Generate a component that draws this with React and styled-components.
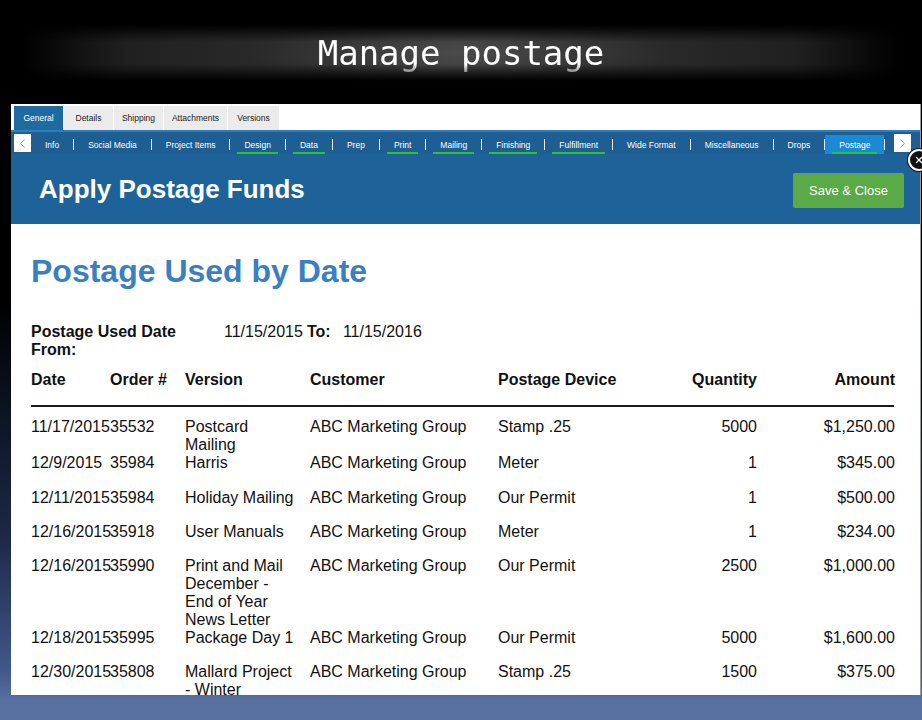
import { Fragment } from "react";
import styled, { createGlobalStyle } from "styled-components";
import { ChevronLeft, ChevronRight, X } from "lucide-react";

const GlobalStyle = createGlobalStyle`
  html, body {
    margin: 0;
    padding: 0;
  }
  body {
    width: 922px;
    height: 720px;
    overflow: hidden;
    font-family: "Liberation Sans", Arial, sans-serif;
    background: linear-gradient(
      to bottom,
      #000 0px,
      #000 300px,
      #1d2949 540px,
      #41588a 670px,
      #5670a0 700px,
      #5670a0 720px
    );
  }
`;

const Page = styled.div`
  display: flex;
  flex-direction: column;
  height: 720px;
`;

const TitleBar = styled.div`
  height: 104px;
  display: flex;
  align-items: center;
  justify-content: center;
`;

const Glow = styled.div`
  width: 880px;
  height: 56px;
  margin-top: 2px;
  display: flex;
  align-items: center;
  justify-content: center;
  background:
    radial-gradient(ellipse 30% 70% at center, rgba(120, 120, 120, 0.3), transparent 80%),
    linear-gradient(
      to right,
      transparent 0%,
      rgba(40, 40, 40, 0.8) 12%,
      rgba(58, 58, 58, 0.95) 50%,
      rgba(40, 40, 40, 0.8) 88%,
      transparent 100%
    );
  -webkit-mask-image: linear-gradient(to bottom, transparent 0%, #000 30%, #000 70%, transparent 100%);
  mask-image: linear-gradient(to bottom, transparent 0%, #000 30%, #000 70%, transparent 100%);
`;

const Title = styled.h1`
  margin: 0;
  font-family: "DejaVu Sans Mono", monospace;
  font-weight: 400;
  font-size: 34px;
  color: #fff;
  line-height: 1;
`;

const Panel = styled.div`
  position: relative;
  margin-left: 11px;
  width: 909px;
  height: 591px;
  background: #fff;
  border-right: 1px solid #9a9a9a;
  display: flex;
  flex-direction: column;
`;

const TopTabs = styled.div`
  display: flex;
  gap: 1px;
  padding: 2px 0 0 3px;
  height: 24px;
`;

const TopTab = styled.div`
  display: flex;
  align-items: center;
  justify-content: center;
  width: ${(p) => p.$w}px;
  font-size: 8.5px;
  color: ${(p) => (p.$active ? "#fff" : "#222")};
  background: ${(p) => (p.$active ? "#1f6aa0" : "#ebebeb")};
`;

const SubBar = styled.div`
  display: flex;
  align-items: center;
  height: 22px;
  padding: 0 0 0 3px;
  background: #1e5e93;
  border-top: 2px solid #2b7fc0;
`;

const ArrowBox = styled.div`
  width: 17px;
  height: 18px;
  background: #fff;
  display: flex;
  align-items: center;
  justify-content: center;
  color: #777;
  margin-left: ${(p) => p.$ml || 0}px;
`;

const SubItem = styled.div`
  position: relative;
  height: 19px;
  display: flex;
  align-items: center;
  padding: 0 14px;
  margin-top: 3px;
  font-size: 8.5px;
  color: #fff;
  background: ${(p) => (p.$active ? "#1a8ad6" : "transparent")};

  &::after {
    content: "";
    display: ${(p) => (p.$done ? "block" : "none")};
    position: absolute;
    left: 7px;
    right: 7px;
    bottom: 0;
    height: 2px;
    background: #2bc42b;
  }
`;

const Sep = styled.div`
  width: 1px;
  height: 11px;
  margin-top: 2px;
  background: #e8eef5;
`;

const Header = styled.div`
  height: 70px;
  background: #1d6399;
  display: flex;
  align-items: center;
  justify-content: space-between;
  padding: 0 16px 0 28px;
`;

const HeaderTitle = styled.h2`
  margin: 0;
  font-size: 26px;
  font-weight: 700;
  color: #fff;
`;

const SaveButton = styled.button`
  width: 111px;
  height: 35px;
  border: none;
  border-radius: 2px;
  background: #5aaa47;
  color: #fff;
  font-family: "Liberation Sans", Arial, sans-serif;
  font-size: 13px;
  margin-top: 2px;
`;

const CloseBadge = styled.div`
  position: absolute;
  top: 45px;
  right: -10px;
  width: 18px;
  height: 18px;
  border-radius: 50%;
  background: #111;
  border: 2px solid #fff;
  box-shadow: 0 0 0 1px #111;
  display: flex;
  align-items: center;
  justify-content: center;
  color: #fff;
`;

const Content = styled.div`
  flex: 1;
  overflow: hidden;
  padding: 0 26px 0 20px;
  color: #111;
`;

const SectionTitle = styled.h3`
  margin: 29px 0 33px;
  font-size: 32px;
  line-height: 37px;
  font-weight: 700;
  color: #3a7fc2;
`;

const Filter = styled.div`
  display: flex;
  font-size: 16px;
  line-height: 18px;
`;

const FilterLabel = styled.div`
  font-weight: 700;
  width: ${(p) => p.$w}px;
  margin-left: ${(p) => p.$ml || 0}px;
`;

const FilterValue = styled.div`
  white-space: nowrap;
`;

const Grid = styled.div`
  display: grid;
  grid-template-columns: 79px 75px 125px 188px 142px 117px 138px;
  font-size: 16px;
  line-height: 18px;
`;

const HeadRow = styled(Grid)`
  margin-top: 12px;
  height: 34px;
  border-bottom: 2px solid #1a1a1a;
  font-weight: 700;
`;

const Row = styled(Grid)`
  min-height: 34px;
  &:first-of-type {
    margin-top: 11px;
  }
  &:nth-of-type(2) {
    min-height: 35px;
  }
`;

const Cell = styled.div`
  white-space: ${(p) => (p.$nowrap ? "nowrap" : "normal")};
  text-align: ${(p) => (p.$right ? "right" : "left")};
  padding-right: ${(p) => p.$pr || 0}px;
`;

const Rows = styled.div``;

const topTabs = [
  ["General", 49, true],
  ["Details", 49],
  ["Shipping", 49],
  ["Attachments", 63],
  ["Versions", 51],
];

const subTabs = [
  ["Info"],
  ["Social Media"],
  ["Project Items"],
  ["Design", true],
  ["Data", true],
  ["Prep"],
  ["Print", true],
  ["Mailing", true],
  ["Finishing", true],
  ["Fulfillment", true],
  ["Wide Format"],
  ["Miscellaneous"],
  ["Drops"],
  ["Postage", true, true],
];

const rows = [
  ["11/17/2015", "35532", "Postcard Mailing", "ABC Marketing Group", "Stamp .25", "5000", "$1,250.00"],
  ["12/9/2015", "35984", "Harris", "ABC Marketing Group", "Meter", "1", "$345.00"],
  ["12/11/2015", "35984", "Holiday Mailing", "ABC Marketing Group", "Our Permit", "1", "$500.00"],
  ["12/16/2015", "35918", "User Manuals", "ABC Marketing Group", "Meter", "1", "$234.00"],
  ["12/16/2015", "35990", "Print and Mail December - End of Year News Letter", "ABC Marketing Group", "Our Permit", "2500", "$1,000.00"],
  ["12/18/2015", "35995", "Package Day 1", "ABC Marketing Group", "Our Permit", "5000", "$1,600.00"],
  ["12/30/2015", "35808", "Mallard Project - Winter", "ABC Marketing Group", "Stamp .25", "1500", "$375.00"],
];

const App = () => {
  return (
    <>
      <GlobalStyle />
      <Page>
        <TitleBar>
          <Glow>
            <Title>Manage postage</Title>
          </Glow>
        </TitleBar>
        <Panel>
          <TopTabs>
            {topTabs.map(([label, w, active]) => (
              <TopTab key={label} $w={w} $active={active}>
                {label}
              </TopTab>
            ))}
          </TopTabs>
          <SubBar>
            <ArrowBox>
              <ChevronLeft size={15} strokeWidth={1.2} />
            </ArrowBox>
            {subTabs.map(([label, done, active], i) => (
              <Fragment key={label}>
                {i > 0 && <Sep />}
                <SubItem $done={done} $active={active}>
                  {label}
                </SubItem>
              </Fragment>
            ))}
            <Sep />
            <ArrowBox $ml={9}>
              <ChevronRight size={15} strokeWidth={1.2} />
            </ArrowBox>
          </SubBar>
          <Header>
            <HeaderTitle>Apply Postage Funds</HeaderTitle>
            <SaveButton>Save &amp; Close</SaveButton>
          </Header>
          <CloseBadge>
            <X size={10} strokeWidth={3} />
          </CloseBadge>
          <Content>
            <SectionTitle>Postage Used by Date</SectionTitle>
            <Filter>
              <FilterLabel $w={193}>Postage Used Date From:</FilterLabel>
              <FilterValue>11/15/2015</FilterValue>
              <FilterLabel $w={36} $ml={4}>To:</FilterLabel>
              <FilterValue>11/15/2016</FilterValue>
            </Filter>
            <HeadRow>
              <Cell>Date</Cell>
              <Cell>Order #</Cell>
              <Cell>Version</Cell>
              <Cell>Customer</Cell>
              <Cell>Postage Device</Cell>
              <Cell $right>Quantity</Cell>
              <Cell $right>Amount</Cell>
            </HeadRow>
            <Rows>
              {rows.map((r, i) => (
                <Row key={i}>
                  <Cell $nowrap>{r[0]}</Cell>
                  <Cell>{r[1]}</Cell>
                  <Cell $pr={13}>{r[2]}</Cell>
                  <Cell>{r[3]}</Cell>
                  <Cell>{r[4]}</Cell>
                  <Cell $right>{r[5]}</Cell>
                  <Cell $right>{r[6]}</Cell>
                </Row>
              ))}
            </Rows>
          </Content>
        </Panel>
      </Page>
    </>
  );
};

export default App;
